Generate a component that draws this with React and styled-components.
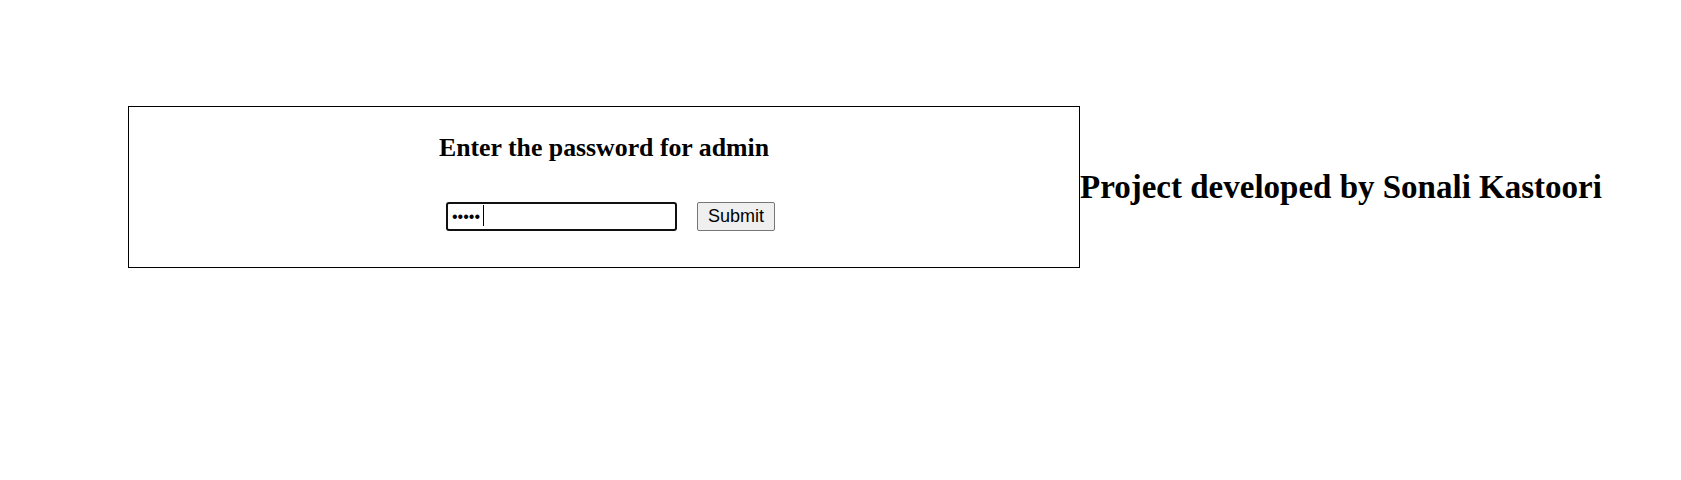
import styled, { createGlobalStyle } from "styled-components";

const GlobalStyle = createGlobalStyle`
  html, body {
    margin: 0;
    padding: 0;
    background: #ffffff;
  }
  body {
    font-family: "Liberation Serif", "Times New Roman", serif;
    color: #000;
  }
`;

const Page = styled.div`
  display: flex;
  align-items: center;
  padding: 106px 0 0 128px;
`;

const Panel = styled.div`
  box-sizing: border-box;
  width: 952px;
  border: 1px solid #000;
  padding: 27px 0 36px;
  text-align: center;
`;

const Title = styled.h2`
  margin: 0 0 40px;
  font-size: 25.8px;
  line-height: 28px;
  font-weight: bold;
`;

const Form = styled.form`
  display: flex;
  justify-content: center;
  align-items: center;
  gap: 20px;
  padding-left: 13px;
  margin: 0;
`;

const Field = styled.div`
  position: relative;
  display: flex;
`;

const PasswordInput = styled.input`
  box-sizing: border-box;
  width: 231px;
  height: 29px;
  padding: 0 4px;
  border: 2px solid #101010;
  border-radius: 3px;
  font-family: "Liberation Sans", Arial, sans-serif;
  font-size: 16px;
  color: #000;
  outline: none;
  background: #fff;
`;

const Caret = styled.span`
  position: absolute;
  left: 37px;
  top: 3px;
  width: 1px;
  height: 21px;
  background: #000;
`;

const SubmitButton = styled.button`
  box-sizing: border-box;
  height: 29px;
  width: 78px;
  padding: 0;
  border: 1px solid #767676;
  border-radius: 2px;
  background: #efefef;
  font-family: "Liberation Sans", Arial, sans-serif;
  font-size: 18px;
  color: #000;
`;

const Credit = styled.h1`
  margin: 0;
  font-size: 33px;
  line-height: 38px;
  font-weight: bold;
  white-space: nowrap;
`;

export default function App() {
  return (
    <>
      <GlobalStyle />
      <Page>
        <Panel>
          <Title>Enter the password for admin</Title>
          <Form onSubmit={(e) => e.preventDefault()}>
            <Field>
              <PasswordInput type="password" defaultValue="admin" />
              <Caret />
            </Field>
            <SubmitButton type="submit">Submit</SubmitButton>
          </Form>
        </Panel>
        <Credit>Project developed by Sonali Kastoori</Credit>
      </Page>
    </>
  );
}
